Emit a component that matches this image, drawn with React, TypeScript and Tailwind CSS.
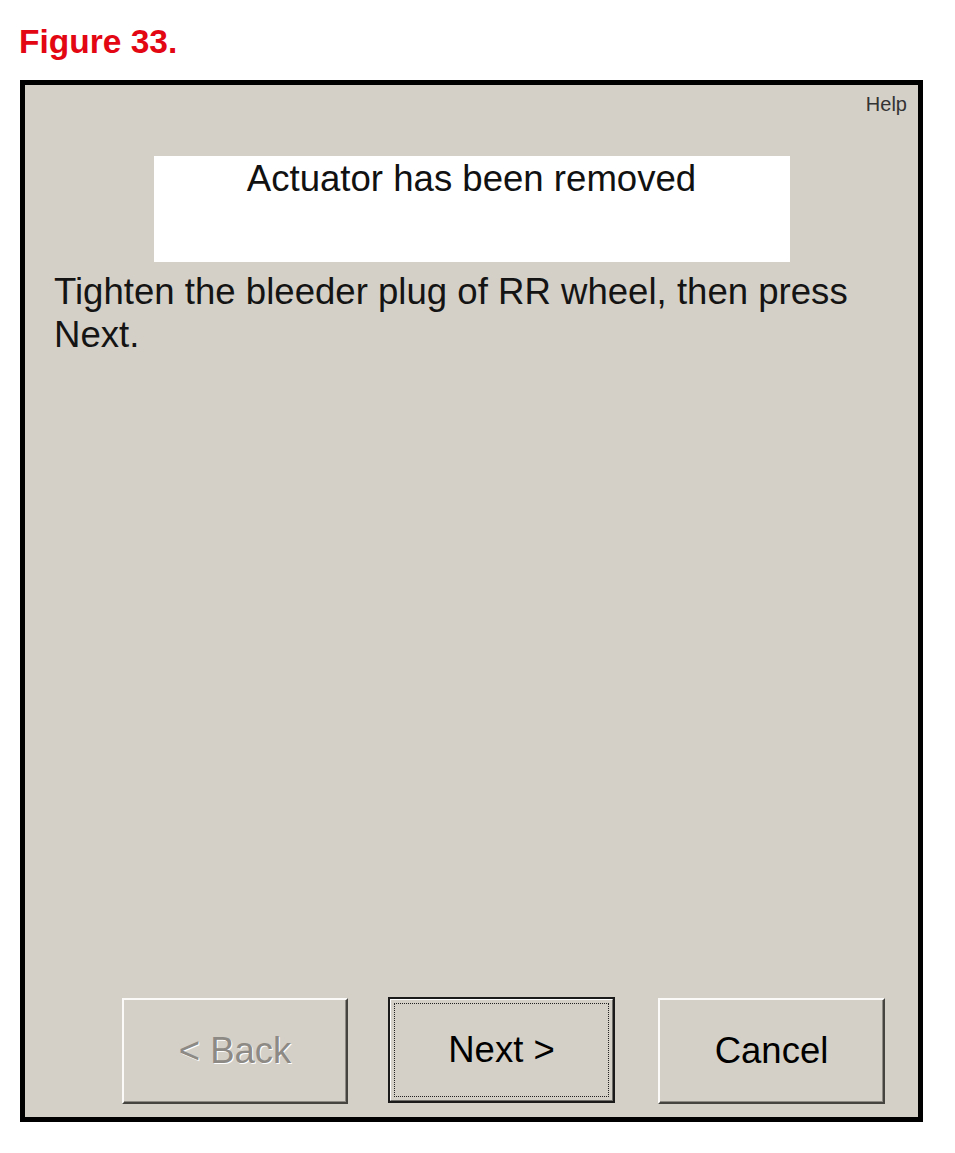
import type { ReactNode } from 'react'

const FONT = "font-['Liberation_Sans',Arial,sans-serif]"

type ButtonProps = {
  children: ReactNode
  disabled?: boolean
  isDefault?: boolean
  className?: string
}

/** Classic Windows push button: raised 3D bevel, optional default frame + focus rect. */
function WizardButton({ children, disabled, isDefault, className = '' }: ButtonProps) {
  const label = disabled ? (
    <span className="text-[#8d8984] [text-shadow:1px_1px_0_#ffffff]">{children}</span>
  ) : (
    <span className="text-black">{children}</span>
  )

  if (isDefault) {
    return (
      <button
        type="button"
        className={`h-[106px] w-[227px] border-2 border-[#1a1a1a] bg-[#d4d0c8] p-0 ${className}`}
      >
        <div className="flex h-full w-full border border-t-white border-l-white border-r-[#6e6c68] border-b-[#6e6c68] p-[3px]">
          <div className="flex h-full w-full items-center justify-center border border-dotted border-[#222]">
            <span className="text-[36.5px] leading-none text-black">{children}</span>
          </div>
        </div>
      </button>
    )
  }

  return (
    <button
      type="button"
      disabled={disabled}
      className={`flex h-[106px] w-[226px] items-center justify-center border-2 border-t-[#fbfaf8] border-l-[#fbfaf8] border-r-[#45443f] border-b-[#45443f] bg-[#d4d0c8] text-[36.5px] leading-none shadow-[inset_-1px_-1px_0_#8d8a84] ${className}`}
    >
      {label}
    </button>
  )
}

export default function App() {
  return (
    <div className={`h-[1153px] w-[955px] bg-white pt-[23px] ${FONT}`}>
      <h1 className="pl-[19px] text-[33.5px] font-bold leading-[38px] text-[#e30613]">Figure 33.</h1>

      <div className="ml-[20px] mt-[19px] flex h-[1042px] w-[903px] flex-col border-[5px] border-black bg-[#d4d0c8]">
        <div className="flex justify-end pr-[11px] pt-[8px]">
          <span className="text-[20px] leading-[23px] text-[#333]">Help</span>
        </div>

        <div className="mx-auto mt-[40px] h-[106px] w-[636px] bg-white pt-px text-center text-[36.6px] leading-[43px] text-[#111]">
          Actuator has been removed
        </div>

        <p className="mt-[8px] pl-[29px] pr-[30px] text-[36.6px] leading-[43px] text-[#141414]">
          Tighten the bleeder plug of RR wheel, then press Next.
        </p>

        <div className="flex-1" />

        <div className="flex items-end pb-[13px] pl-[97px]">
          <WizardButton disabled>&lt; Back</WizardButton>
          <WizardButton isDefault className="mb-px ml-[40px]">
            Next &gt;
          </WizardButton>
          <WizardButton className="ml-[43px] w-[227px]">Cancel</WizardButton>
        </div>
      </div>
    </div>
  )
}
